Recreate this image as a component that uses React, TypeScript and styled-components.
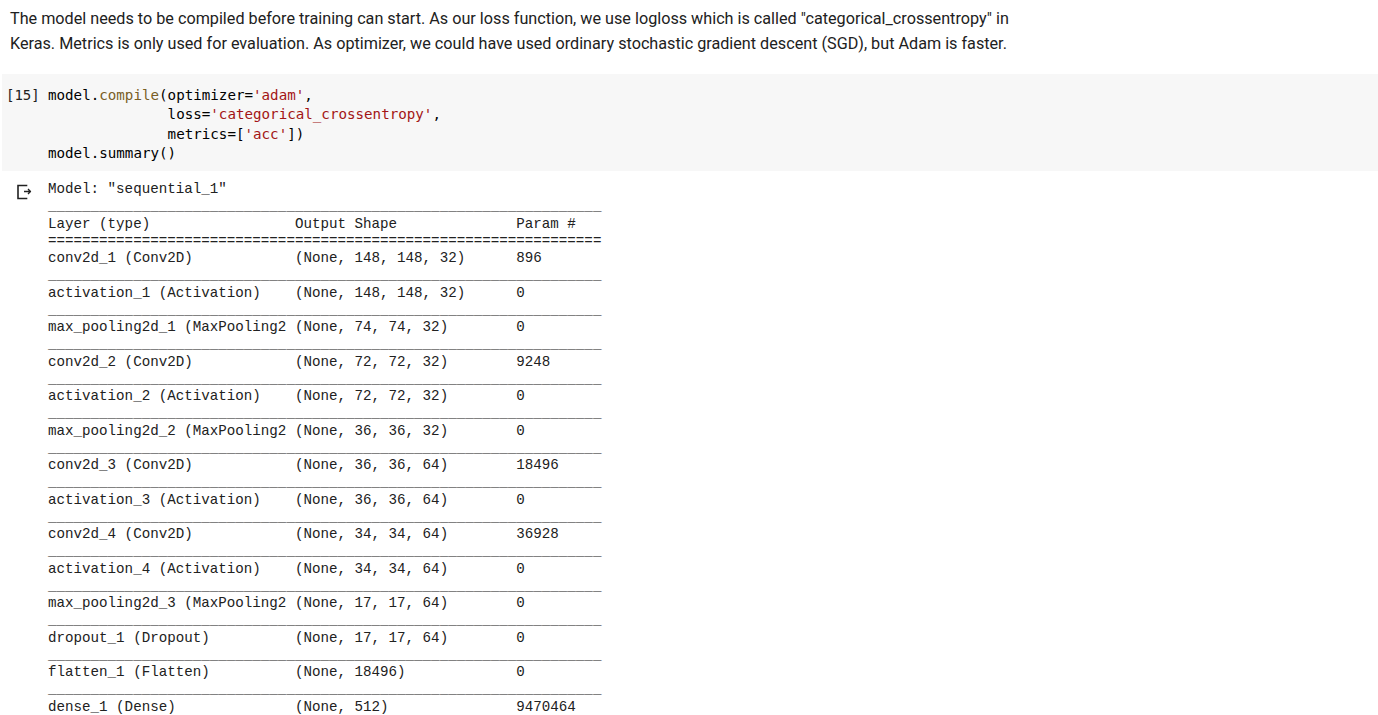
import styled, { createGlobalStyle } from "styled-components";

const GlobalStyle = createGlobalStyle`
    html, body {
        margin: 0;
        padding: 0;
        background: #ffffff;
    }
`

type Layer = [string, string, string]

const layers: Layer[] = [
    ["conv2d_1 (Conv2D)", "(None, 148, 148, 32)", "896"],
    ["activation_1 (Activation)", "(None, 148, 148, 32)", "0"],
    ["max_pooling2d_1 (MaxPooling2", "(None, 74, 74, 32)", "0"],
    ["conv2d_2 (Conv2D)", "(None, 72, 72, 32)", "9248"],
    ["activation_2 (Activation)", "(None, 72, 72, 32)", "0"],
    ["max_pooling2d_2 (MaxPooling2", "(None, 36, 36, 32)", "0"],
    ["conv2d_3 (Conv2D)", "(None, 36, 36, 64)", "18496"],
    ["activation_3 (Activation)", "(None, 36, 36, 64)", "0"],
    ["conv2d_4 (Conv2D)", "(None, 34, 34, 64)", "36928"],
    ["activation_4 (Activation)", "(None, 34, 34, 64)", "0"],
    ["max_pooling2d_3 (MaxPooling2", "(None, 17, 17, 64)", "0"],
    ["dropout_1 (Dropout)", "(None, 17, 17, 64)", "0"],
    ["flatten_1 (Flatten)", "(None, 18496)", "0"],
    ["dense_1 (Dense)", "(None, 512)", "9470464"],
]

// keras summary column stops for line_length 65
const row = ([a, b, c]: Layer) => a.padEnd(29) + b.padEnd(26) + c.padEnd(10)

const summaryText = [
    'Model: "sequential_1"',
    "_".repeat(65),
    row(["Layer (type)", "Output Shape", "Param #"]),
    "=".repeat(65),
    ...layers.flatMap((l, i) => i === layers.length - 1 ? [row(l)] : [row(l), "_".repeat(65)]),
].join("\n")

export default function App() {
    return <Notebook>
        <GlobalStyle />
        <MarkdownCell>
            The model needs to be compiled before training can start. As our loss function, we use logloss which is called "categorical_crossentropy" in Keras. Metrics is only used for evaluation. As optimizer, we could have used ordinary stochastic gradient descent (SGD), but Adam is faster.
        </MarkdownCell>

        <CodeCell>
            <ExecCount>[15]</ExecCount>
            <Code>
                model.<Method>compile</Method>(optimizer=<Str>'adam'</Str>,{"\n"}
                {"              "}loss=<Str>'categorical_crossentropy'</Str>,{"\n"}
                {"              "}metrics=[<Str>'acc'</Str>]){"\n"}
                model.summary()
            </Code>
        </CodeCell>

        <OutputArea>
            <OutputIcon>
                <svg width="16" height="16" viewBox="0 0 16 16" fill="none" stroke="#212121" strokeWidth="1.6">
                    <path d="M10.5 1.5H2v13h8.5" strokeLinecap="square" />
                    <path d="M8 7.5h6.5M12 5l2.5 2.5L12 10" strokeLinejoin="round" strokeWidth="1.3" />
                </svg>
            </OutputIcon>
            <Summary>{summaryText}</Summary>
        </OutputArea>
    </Notebook>
}

const Notebook = styled.main`
    width: 1378px;
    display: flex;
    flex-direction: column;
`

const MarkdownCell = styled.p`
    margin: 0;
    padding: 6px 0 0 10px;
    width: 1020px;
    font-family: Roboto, "Noto Sans", sans-serif;
    font-size: 16.2px;
    line-height: 25px;
    color: #212121;
`

const CodeCell = styled.section`
    margin: 18px 0 0 2px;
    padding: 12px 0 8px;
    background: #f7f7f7;
    display: grid;
    grid-template-columns: 46px 1fr;
`

const ExecCount = styled.div`
    padding-left: 4px;
    font-family: "DejaVu Sans Mono", monospace;
    font-size: 14px;
    line-height: 19.3px;
    color: #212121;
`

const Code = styled.pre`
    margin: 0;
    font-family: "DejaVu Sans Mono", monospace;
    font-size: 14.2px;
    line-height: 19.3px;
    color: #000000;
`

const Method = styled.span`
    color: #795e26;
`

const Str = styled.span`
    color: #a31515;
`

const OutputArea = styled.section`
    margin-top: 10px;
    display: grid;
    grid-template-columns: 48px 1fr;
`

const OutputIcon = styled.div`
    padding: 3px 0 0 16px;
`

const Summary = styled.pre`
    margin: 0;
    font-family: "Liberation Mono", "Courier New", monospace;
    font-size: 14.2px;
    line-height: 17.25px;
    color: #212121;
`
